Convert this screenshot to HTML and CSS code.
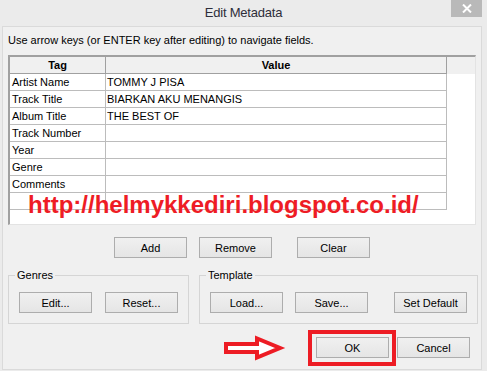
FILE: index.html
```html
<!DOCTYPE html>
<html lang="en">
<head>
    <meta charset="UTF-8">
    <title>Edit Metadata</title>
    <link rel="stylesheet" href="styles.css">
</head>
<body>
    <div class="window">
        <div class="titlebar">
            <span class="title">Edit Metadata</span>
            <span class="close">
                <svg width="10" height="9" viewBox="0 0 10 9">
                    <path d="M1 0.5 L9 8.5 M9 0.5 L1 8.5" stroke="#fff" stroke-width="2"/>
                </svg>
            </span>
        </div>

        <div class="client">
            <p class="hint">Use arrow keys (or ENTER key after editing) to navigate fields.</p>

            <div class="scroll">
                <table class="grid">
                    <thead>
                        <tr><th class="col-tag">Tag</th><th class="col-value">Value</th></tr>
                    </thead>
                    <tbody>
                        <tr><td>Artist Name</td><td>TOMMY J PISA</td></tr>
                        <tr><td>Track Title</td><td>BIARKAN AKU MENANGIS</td></tr>
                        <tr><td>Album Title</td><td>THE BEST OF</td></tr>
                        <tr><td>Track Number</td><td></td></tr>
                        <tr><td>Year</td><td></td></tr>
                        <tr><td>Genre</td><td></td></tr>
                        <tr><td>Comments</td><td></td></tr>
                        <tr><td></td><td></td></tr>
                    </tbody>
                </table>
                <div class="watermark">http://helmykkediri.blogspot.co.id/</div>
            </div>

            <div class="edit-buttons">
                <button class="btn">Add</button>
                <button class="btn gap-small">Remove</button>
                <button class="btn gap-wide">Clear</button>
            </div>

            <div class="groups">
                <fieldset class="group genres">
                    <legend>Genres</legend>
                    <button class="btn">Edit...</button>
                    <button class="btn">Reset...</button>
                </fieldset>
                <fieldset class="group template">
                    <legend>Template</legend>
                    <button class="btn">Load...</button>
                    <button class="btn gap-small">Save...</button>
                    <button class="btn push-right">Set Default</button>
                </fieldset>
            </div>

            <div class="dialog-buttons">
                <svg class="arrow" width="66" height="28" viewBox="0 0 66 28">
                    <polygon points="4,11 35,11 35,5.5 58,15 35,24.5 35,19 4,19" fill="#fff" stroke="#ed1c24" stroke-width="4"/>
                </svg>
                <button class="btn marked">OK</button>
                <button class="btn">Cancel</button>
            </div>
        </div>
    </div>
</body>
</html>
```

FILE: styles.css
```css
body {
    margin: 0;
    padding: 0;
    background-color: #ebebeb;
    font-family: "Liberation Sans", Arial, sans-serif;
    font-size: 11px;
    color: #000;
}

.window {
    width: 487px;
    height: 371px;
    overflow: hidden;
}

/* title bar */
.titlebar {
    height: 26px;
    display: flex;
    align-items: flex-start;
}

.title {
    flex: 1;
    text-align: center;
    padding-left: 36px;
    font-size: 13px;
    letter-spacing: -0.2px;
    line-height: 16px;
    margin-top: 5px;
    color: #2e2e3a;
}

.close {
    width: 31px;
    height: 17px;
    margin-right: 5px;
    background-color: #b9b9b9;
    display: flex;
    align-items: center;
    justify-content: center;
}

.close svg {
    display: block;
}

/* client area */
.client {
    margin-left: 2px;
    width: 480px;
    height: 344px;
    box-sizing: border-box;
    border: 1px solid #dadada;
    background-color: #f0f0f0;
}

.hint {
    margin: 6px 0 0 5px;
    line-height: 14px;
}

/* table */
.scroll {
    position: relative;
    margin: 8px 0 0 5px;
    width: 468px;
    height: 170px;
    box-sizing: border-box;
    border-top: 2px solid #a0a0a0;
    border-left: 2px solid #a0a0a0;
    border-right: 1px solid #e3e3e3;
    border-bottom: 1px solid #e3e3e3;
    background: linear-gradient(to bottom, #f0f0f0 17px, #fff 17px);
}

.grid {
    border-collapse: separate;
    border-spacing: 0;
    table-layout: fixed;
    width: 437px;
}

.grid th {
    height: 16px;
    padding: 0;
    font-weight: bold;
    text-align: center;
    background-color: #f0f0f0;
    border-right: 1px solid #a0a0a0;
    border-bottom: 1px solid #a0a0a0;
    line-height: 16px;
}

.col-tag {
    width: 95px;
}

.grid td {
    height: 16px;
    padding: 0 0 0 2px;
    background-color: #fff;
    border-right: 1px solid #bcbcbc;
    border-bottom: 1px solid #bcbcbc;
    line-height: 16px;
    white-space: nowrap;
    overflow: hidden;
}

.grid td + td {
    padding-left: 1px;
}

.watermark {
    position: absolute;
    left: 18px;
    top: 136px;
    font-size: 24px;
    line-height: 24px;
    font-weight: bold;
    color: #ee1c25;
    white-space: nowrap;
}

/* buttons */
.btn {
    width: 73px;
    height: 21px;
    padding: 0;
    box-sizing: border-box;
    border: 1px solid #adadad;
    background: linear-gradient(to bottom, #f0f0f0, #e5e5e5);
    font-family: "Liberation Sans", Arial, sans-serif;
    font-size: 11px;
    color: #000;
}

.gap-small {
    margin-left: 12px;
}

.gap-wide {
    margin-left: 25px;
}

.push-right {
    margin-left: auto;
}

.edit-buttons {
    display: flex;
    justify-content: center;
    margin-top: 12px;
}

/* group boxes */
.groups {
    display: flex;
    gap: 10px;
    margin: 10px 0 0 5px;
}

.group {
    margin: 0;
    padding: 10px;
    border: 1px solid #d5d5d5;
    display: flex;
    box-sizing: border-box;
    min-width: 0;
}

.group legend {
    margin-left: -4px;
    padding: 0 2px;
    line-height: 14px;
}

.genres {
    width: 181px;
    justify-content: space-between;
}

.template {
    width: 279px;
}

/* OK / Cancel */
.dialog-buttons {
    display: flex;
    justify-content: flex-end;
    align-items: center;
    gap: 8px;
    margin-top: 13px;
    padding-right: 11px;
}

.arrow {
    display: block;
    margin: -4px 20px -3px 0;
}

.marked {
    position: relative;
}

.marked::after {
    content: "";
    position: absolute;
    left: -9px;
    top: -8px;
    right: -8px;
    bottom: -9px;
    border: 4px solid #ed1c24;
}
```
